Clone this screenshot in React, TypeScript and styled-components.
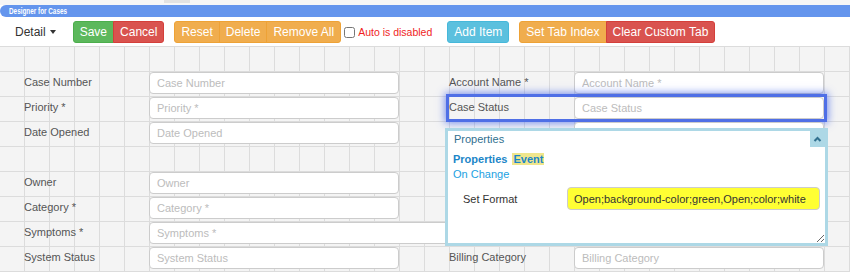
import React from 'react';
import styled, { createGlobalStyle, css } from 'styled-components';

const GlobalStyle = createGlobalStyle`
  body {
    margin: 0;
    background: #fff;
    font-family: 'Liberation Sans', Arial, sans-serif;
  }
  * {
    box-sizing: border-box;
  }
`;

const Page = styled.div`
  width: 850px;
  height: 272px;
  overflow: hidden;
  display: flex;
  flex-direction: column;
`;

const TopStrip = styled.div`
  flex: none;
  height: 5px;
  background: #f6f6f6;
`;

const TopTab = styled.div`
  margin-left: 164px;
  width: 26px;
  height: 3px;
  background: #e2e2e2;
`;

const TitleBar = styled.div`
  flex: none;
  height: 12px;
  display: flex;
  align-items: center;
  padding-left: 9px;
  background: #6495ed;
  border-radius: 6px 0 0 6px;
`;

const Title = styled.span`
  color: #fff;
  font-size: 9.5px;
  font-weight: bold;
  line-height: 12px;
  white-space: nowrap;
  transform: scaleX(0.67);
  transform-origin: left center;
`;

const Toolbar = styled.div`
  flex: none;
  height: 29px;
  display: flex;
  align-items: center;
  gap: 10px;
  padding: 1px 0 0 15px;
`;

const Detail = styled.div`
  display: flex;
  align-items: center;
  gap: 4px;
  margin-right: 7px;
  color: #333;
  font-size: 12px;
`;

const Caret = styled.span`
  width: 0;
  height: 0;
  border-left: 3.5px solid transparent;
  border-right: 3.5px solid transparent;
  border-top: 4px solid #333;
`;

const ButtonGroup = styled.div`
  display: flex;
`;

type Variant = 'success' | 'danger' | 'warning' | 'info';

const palette: Record<Variant, { bg: string; border: string }> = {
  success: { bg: '#5cb85c', border: '#4cae4c' },
  danger: { bg: '#d9534f', border: '#d43f3a' },
  warning: { bg: '#f0ad4e', border: '#eea236' },
  info: { bg: '#5bc0de', border: '#46b8da' },
};

const Btn = styled.button<{ $variant: Variant }>`
  height: 22px;
  padding: 0 6px;
  font-family: inherit;
  font-size: 12px;
  line-height: 20px;
  color: #fff;
  border-radius: 0;
  ${({ $variant }) => css`
    background: ${palette[$variant].bg};
    border: 1px solid ${palette[$variant].border};
  `}
  & + & {
    margin-left: -1px;
  }
  &:first-child {
    border-top-left-radius: 3px;
    border-bottom-left-radius: 3px;
  }
  &:last-child {
    border-top-right-radius: 3px;
    border-bottom-right-radius: 3px;
  }
`;

const CheckLabel = styled.label`
  display: flex;
  align-items: center;
  gap: 3px;
  margin: 0 5px 0 -7px;
  color: #f01e1e;
  font-size: 10.5px;

  input {
    width: 11px;
    height: 11px;
    margin: 0;
  }
`;

const Canvas = styled.div`
  flex: 1;
  position: relative;
  background-color: #f4f4f4;
  background-image: linear-gradient(to right, transparent 24px, #dcdcdc 24px, #dcdcdc 25px),
    linear-gradient(to bottom, #dcdcdc 0, #dcdcdc 1px, transparent 1px);
  background-size: 25px 25px;
`;

const FieldGrid = styled.div`
  display: grid;
  grid-template-columns: 425px 425px;
  grid-auto-rows: 22px;
  row-gap: 3px;
  padding: 26px 0 0 24px;
`;

const Field = styled.div<{ $wide?: boolean; $active?: boolean }>`
  display: grid;
  grid-template-columns: ${({ $wide }) => ($wide ? '125px 675px' : '125px 250px')};
  align-items: center;
  justify-self: start;
  ${({ $wide }) => $wide && 'grid-column: 1 / -1;'}
  ${({ $active }) =>
    $active &&
    css`
      box-shadow: 0 0 0 3px #4f6fe6, 0 0 8px 4px rgba(74, 105, 235, 0.75);
    `}
`;

const Label = styled.span`
  color: #555;
  font-size: 11px;
  line-height: 20px;
  align-self: start;
`;

const Input = styled.input`
  height: 22px;
  width: 100%;
  padding: 0 7px;
  border: 1px solid #ccc;
  border-radius: 4px;
  background: #fff;
  font-family: inherit;
  font-size: 11px;
  color: #333;
  outline: none;

  &::placeholder {
    color: #bcbcbc;
  }
`;

const Popup = styled.div`
  position: absolute;
  left: 445px;
  top: 82px;
  width: 383px;
  height: 118px;
  display: flex;
  flex-direction: column;
  background: #fff;
  border: 3px solid #add8e6;
  resize: both;
  overflow: auto;
`;

const PopupHeader = styled.div`
  flex: none;
  height: 15px;
  display: flex;
  align-items: center;
  padding-left: 6px;
  color: #31708f;
  font-size: 11px;
`;

const Collapse = styled.span`
  margin-left: auto;
  width: 15px;
  height: 16px;
  display: flex;
  align-items: center;
  justify-content: center;
  background: #add8e6;
`;

const Tabs = styled.div`
  display: flex;
  align-items: center;
  gap: 4px;
  margin-top: 7px;
  padding-left: 4px;
  font-size: 11px;
  font-weight: bold;
  line-height: 12px;
  color: #1c86c8;
`;

const Tab = styled.span<{ $marked?: boolean }>`
  padding: 0 1px;
  ${({ $marked }) => $marked && 'background: #f0e68c;'}
`;

const EventName = styled.div`
  margin-top: 3px;
  padding-left: 5px;
  color: #1ba1e2;
  font-size: 11px;
  line-height: 12px;
`;

const FormatRow = styled.div`
  display: flex;
  align-items: center;
  margin-top: 7px;
  padding-left: 15px;
`;

const FormatLabel = styled.span`
  width: 104px;
  color: #333;
  font-size: 11px;
`;

const FormatInput = styled(Input)`
  width: 253px;
  height: 23px;
  padding: 0 6px;
  background: #ffff33;
  color: #333;
`;

const left = ['Case Number', 'Priority *', 'Date Opened', '', 'Owner', 'Category *'];
const right = ['Account Name *', 'Case Status', 'Date Closed', '', '', ''];

const FormField: React.FC<{ name: string; active?: boolean; wide?: boolean }> = ({ name, active, wide }) =>
  name ? (
    <Field $active={active} $wide={wide}>
      <Label>{name}</Label>
      <Input placeholder={name} readOnly />
    </Field>
  ) : (
    <div />
  );

export default function App() {
  return (
    <Page>
      <GlobalStyle />
      <TopStrip>
        <TopTab />
      </TopStrip>
      <TitleBar>
        <Title>Designer for Cases</Title>
      </TitleBar>
      <Toolbar>
        <Detail>
          Detail <Caret />
        </Detail>
        <ButtonGroup>
          <Btn $variant="success">Save</Btn>
          <Btn $variant="danger">Cancel</Btn>
        </ButtonGroup>
        <ButtonGroup>
          <Btn $variant="warning">Reset</Btn>
          <Btn $variant="warning">Delete</Btn>
          <Btn $variant="warning">Remove All</Btn>
        </ButtonGroup>
        <CheckLabel>
          <input type="checkbox" />
          Auto is disabled
        </CheckLabel>
        <ButtonGroup>
          <Btn $variant="info">Add Item</Btn>
        </ButtonGroup>
        <ButtonGroup>
          <Btn $variant="warning">Set Tab Index</Btn>
          <Btn $variant="danger">Clear Custom Tab</Btn>
        </ButtonGroup>
      </Toolbar>
      <Canvas>
        <FieldGrid>
          {left.map((name, i) => (
            <React.Fragment key={i}>
              <FormField name={name} />
              <FormField name={right[i]} active={right[i] === 'Case Status'} />
            </React.Fragment>
          ))}
          <FormField name="Symptoms *" wide />
          <FormField name="System Status" />
          <FormField name="Billing Category" />
        </FieldGrid>
        <Popup>
          <PopupHeader>
            Properties
            <Collapse>
              <svg width="9" height="6" viewBox="0 0 9 6">
                <polyline points="1.5,5 4.5,2 7.5,5" fill="none" stroke="#31708f" strokeWidth="2" />
              </svg>
            </Collapse>
          </PopupHeader>
          <Tabs>
            <Tab>Properties</Tab>
            <Tab $marked>Event</Tab>
          </Tabs>
          <EventName>On Change</EventName>
          <FormatRow>
            <FormatLabel>Set Format</FormatLabel>
            <FormatInput readOnly value="Open;background-color;green,Open;color;white" />
          </FormatRow>
        </Popup>
      </Canvas>
    </Page>
  );
}
